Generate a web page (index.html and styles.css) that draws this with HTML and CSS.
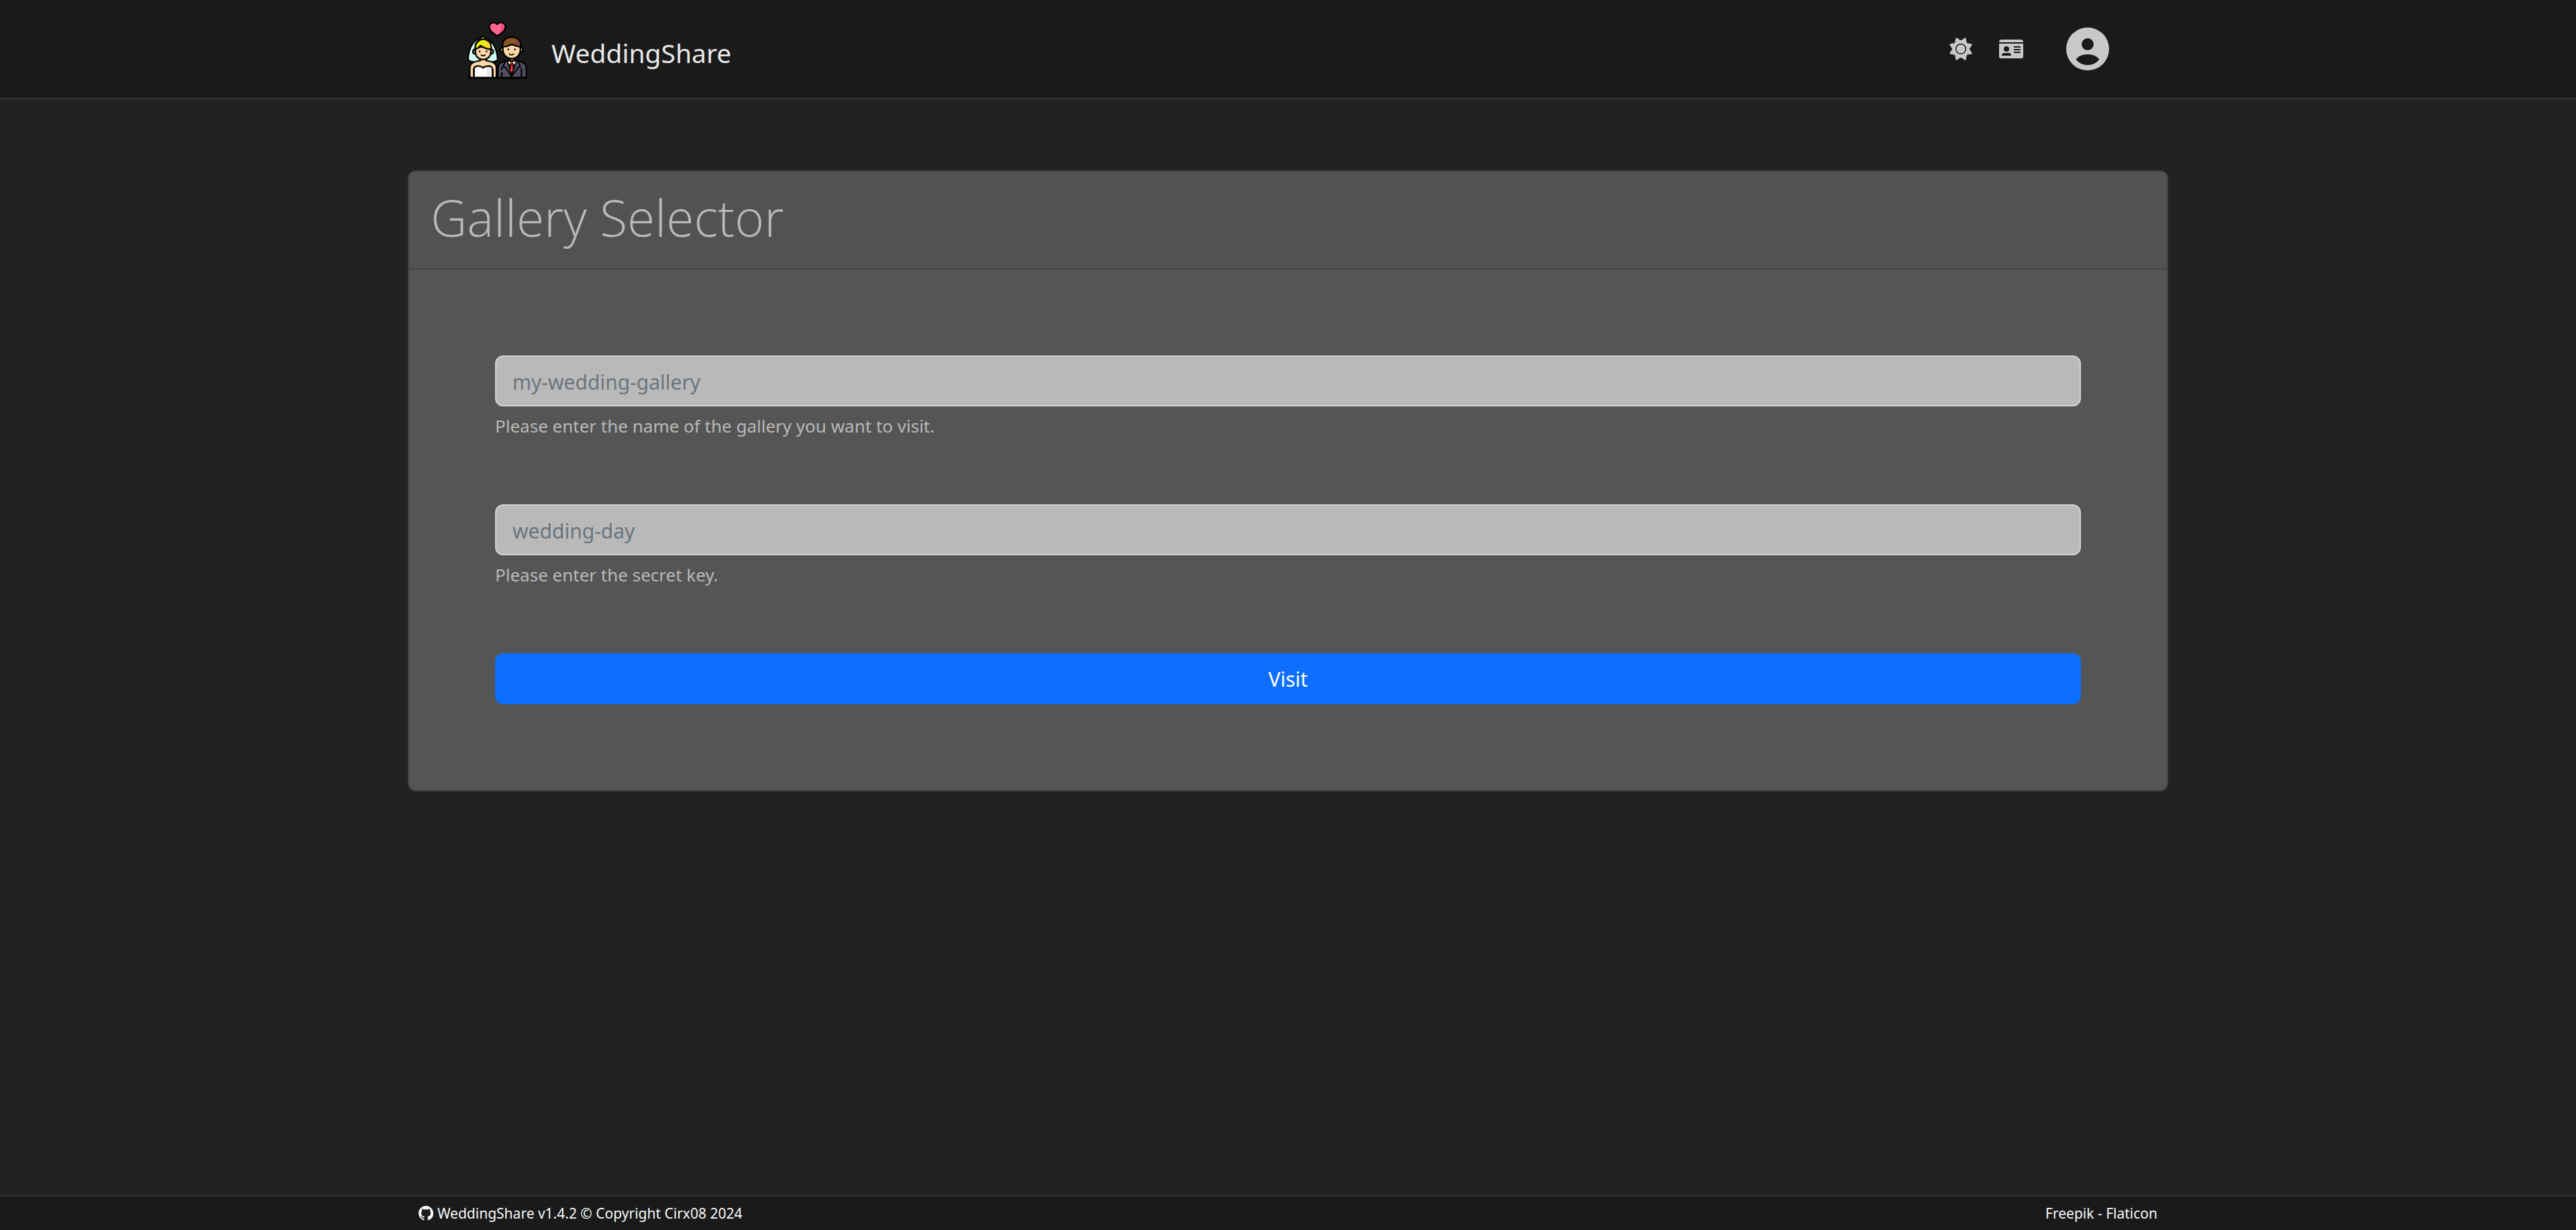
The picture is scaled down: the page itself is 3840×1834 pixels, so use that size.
FILE: index.html
```html
<!DOCTYPE html>
<html lang="en">
<head>
<meta charset="utf-8">
<meta name="viewport" content="width=device-width, initial-scale=1">
<title>WeddingShare</title>
<link rel="stylesheet" href="styles.css">
</head>
<body>
<header class="site-header">
  <nav class="container navbar">
    <a class="brand" href="#">
      <svg class="brand-logo" viewBox="48 24 270 270" aria-hidden="true">
        <g stroke="#000" stroke-width="7" stroke-linejoin="round" stroke-linecap="round">
          <path fill="#ff6690" d="M183 101C166 89 148 78 148 60C148 42 172 34 183 49C195 34 220 42 220 60C220 78 200 90 183 101Z"/>
          <path fill="#ff4f79" stroke="none" d="M198 46C210 42 216 52 216 60C216 76 202 84 189 93C200 77 202 61 198 46Z"/>
          <path fill="#d0fff5" d="M120 111C82 108 55 151 53 205C53 212 72 219 90 218L152 218C170 218 187 212 186 205C182 151 156 108 120 111Z"/>
          <path fill="none" stroke="#273b40" stroke-width="4" d="M84 137Q95 119 110 113M134 113Q149 121 158 137"/>
          <path fill="#dce717" stroke-width="6" d="M109 116C108 101 132 101 132 116Z"/>
          <path fill="#fed8a9" d="M61 287V244C61 221 80 215 108 211V198H134V211C162 215 180 221 180 244V287Z"/>
          <ellipse cx="82" cy="171" rx="7" ry="9" fill="#fed8a9"/>
          <ellipse cx="159" cy="171" rx="7" ry="9" fill="#fed8a9"/>
          <path fill="#fed8a9" d="M86 150H155V172C155 218 86 218 86 172Z"/>
          <path fill="#e9f000" d="M85 159C81 106 158 96 157 160C130 159 122 151 108 144C103 155 96 157 85 159Z"/>
          <path fill="#ffd52d" stroke="none" d="M132 122C149 126 155 143 152 156C136 155 127 151 118 145Q138 145 132 122Z"/>
          <path fill="#fff" d="M79 287V250C79 237 94 234 104 236Q115 237 121 244Q128 236 140 236C154 234 163 240 163 253V287Z"/>
          <path fill="#e8e8e8" stroke="none" d="M137 241Q159 236 159 253V283H137Z"/>
          <path fill="#504e60" d="M187 287V244C187 222 205 215 232 211L248 283L266 211C296 216 314 222 314 246V287Z"/>
          <path fill="#504e60" stroke-width="6" d="M218 217L210 238L220 242L248 281L278 242L287 238L278 217L264 208H232Z"/>
          <path fill="#222026" stroke-width="5" d="M230 213L248 280L268 213Z"/>
          <path fill="#fed8a9" d="M238 195H260V212H238Z"/>
          <path fill="#fff" stroke-width="3" d="M231 212L248 216L268 212L262 231L248 219L237 231Z"/>
          <path fill="#ff3030" stroke-width="2" d="M243 218H254L252 229L255 253L248 269L241 253L246 229Z"/>
          <ellipse cx="205" cy="163" rx="7" ry="9" fill="#fed8a9"/>
          <ellipse cx="291" cy="163" rx="7" ry="9" fill="#fed8a9"/>
          <path fill="#fed8a9" d="M209 139H287V162C286 216 211 216 209 162Z"/>
          <path fill="#8b5720" d="M208 149C197 93 297 91 289 150Q262 145 248 138Q228 150 208 149Z"/>
          <path fill="#87493e" stroke="none" d="M263 114C281 118 287 132 285 144Q270 142 260 136Q268 128 263 114Z"/>
          <path fill="none" d="M79 250V286M163 250V286M292 247V286M204 243V250M204 266V284M57 289H314"/>
          <path fill="none" d="M105 169V171M136 169V171M233 160V162M263 160V162"/>
          <path fill="none" stroke-width="5" d="M112 186Q121 193 130 186M238 181Q248 190 257 181"/>
        </g>
      </svg>
      <span>WeddingShare</span>
    </a>
    <div class="nav-actions">
      <button class="icon-button" type="button" aria-label="Change theme">
        <svg class="icon-theme" viewBox="0 0 34 34" aria-hidden="true">
          <path fill="#c8c8c8" stroke="#c8c8c8" stroke-width="2" stroke-linejoin="round" d="M17 5.500L23.500 1.300L25.100 8.900L32.700 10.500L28.500 17L32.700 23.500L25.100 25.100L23.500 32.700L17 28.500L10.500 32.700L8.900 25.100L1.300 23.500L5.500 17L1.300 10.500L8.900 8.900L10.500 1.300Z"/>
          <circle cx="17" cy="17" r="7.300" fill="none" stroke="#1a1a1a" stroke-width="1.500"/>
        </svg>
      </button>
      <button class="icon-button" type="button" aria-label="Identity">
        <svg class="icon-card" viewBox="0 0 36 28" aria-hidden="true">
          <path fill="#c8c8c8" d="M0 4Q0 0 4 0H32Q36 0 36 4ZM0 6H36V25Q36 28 33 28H3Q0 28 0 25Z"/>
          <circle cx="11" cy="14" r="4" fill="#1a1a1a"/>
          <path fill="#1a1a1a" d="M4 24Q4 20 8 20H14Q18 20 18 24ZM22 10H32V12H22ZM22 14H32V16H22ZM22 18H32V20H22Z"/>
        </svg>
      </button>
      <button class="icon-button account" type="button" aria-label="Account">
        <svg class="icon-account" viewBox="0 0 64 64" aria-hidden="true">
          <circle cx="32" cy="32" r="32" fill="#c8c8c8"/>
          <circle cx="32" cy="25" r="9" fill="#1a1a1a"/>
          <path fill="#1a1a1a" d="M14.500 47.500Q20 40 32 40T49.500 47.500Q43 56 32 56T14.500 47.500Z"/>
        </svg>
      </button>
    </div>
  </nav>
</header>

<main class="main">
  <section class="card">
    <h1 class="card-title">Gallery Selector</h1>
    <form class="card-body">
      <div class="field">
        <input class="text-input" id="gallery" type="text" placeholder="my-wedding-gallery">
        <label class="help" for="gallery">Please enter the name of the gallery you want to visit.</label>
      </div>
      <div class="field">
        <input class="text-input" id="key" type="password" placeholder="wedding-day">
        <label class="help" for="key">Please enter the secret key.</label>
      </div>
      <button class="submit" type="button">Visit</button>
    </form>
  </section>
</main>

<footer class="site-footer">
  <div class="container footer-row">
    <a class="footer-link" href="#">
      <svg class="icon-github" viewBox="0 0 16 16" aria-hidden="true"><path fill="currentColor" d="M8 0C3.580 0 0 3.580 0 8c0 3.540 2.290 6.530 5.470 7.590.4.070.55-.17.55-.38 0-.19-.01-.82-.01-1.490-2.010.37-2.530-.49-2.690-.94-.09-.23-.48-.94-.82-1.130-.28-.15-.68-.52-.01-.53.63-.01 1.080.58 1.230.82.72 1.210 1.870.87 2.330.66.07-.52.28-.87.51-1.070-1.780-.2-3.640-.89-3.640-3.950 0-.87.31-1.590.82-2.150-.08-.2-.36-1.020.08-2.120 0 0 .67-.21 2.200.82.64-.18 1.320-.27 2-.27s1.360.09 2 .27c1.530-1.040 2.200-.82 2.200-.82.44 1.100.16 1.920.08 2.120.51.56.82 1.270.82 2.150 0 3.070-1.870 3.750-3.650 3.950.29.25.54.73.54 1.480 0 1.070-.01 1.930-.01 2.200 0 .21.15.46.55.38A8.010 8.010 0 0 0 16 8c0-4.420-3.580-8-8-8z"/></svg>
      <span>WeddingShare v1.4.2 © Copyright Cirx08 2024</span>
    </a>
    <span><a class="footer-link" href="#">Freepik</a> - <a class="footer-link" href="#">Flaticon</a></span>
  </div>
</footer>
</body>
</html>
```
FILE: styles.css
```css
*, *::before, *::after { box-sizing: border-box; }

body {
  display: flex;
  flex-direction: column;
  min-height: 100vh;
  margin: 0;
  background: #222;
  color: #b9b9b9;
  font-family: "Segoe UI", "Noto Sans", "Open Sans", sans-serif;
  font-size: 30px;
  line-height: 48px;
}

a { color: inherit; text-decoration: none; }
button, input { font: inherit; }
svg { display: block; flex: none; }

.container {
  width: 100%;
  max-width: 2640px;
  margin: 0 auto;
}

.site-header {
  background: #1a1a1a;
  border-bottom: 2px solid #333;
}

.navbar {
  display: flex;
  align-items: center;
  justify-content: space-between;
  padding: 28px 96px;
}

.brand {
  display: flex;
  align-items: center;
  gap: 36px;
  color: #e8e8e8;
  font-size: 39px;
}

.brand span { padding-top: 12px; }
.brand-logo { width: 90px; height: 90px; }

.nav-actions { display: flex; align-items: center; gap: 40px; }

.icon-button {
  padding: 0;
  border: 0;
  background: none;
  cursor: pointer;
}

.account { margin-left: 24px; }
.icon-theme { width: 34px; height: 34px; }
.icon-card { width: 36px; height: 28px; }
.icon-account { width: 64px; height: 64px; }

.main {
  flex: 1;
  width: 100%;
  max-width: 2640px;
  margin: 0 auto;
  padding: 106px 8px;
}

.card {
  border: 2px solid #444;
  border-radius: 12px;
  background: #555;
}

.card-title {
  margin: 0;
  padding: 20px 32px 28px;
  border-bottom: 2px solid #444;
  border-radius: 10px 10px 0 0;
  background: #525252;
  font-family: "Segoe UI", "Open Sans", "Noto Sans", sans-serif;
  font-size: 75px;
  font-weight: 300;
  line-height: 96px;
}

.card-body {
  display: flex;
  flex-direction: column;
  gap: 96px;
  padding: 128px;
}

.field {
  display: flex;
  flex-direction: column;
  gap: 8px;
}

.text-input {
  width: 100%;
  height: 76px;
  padding: 2px 24px 0;
  border: 2px solid #ced4da;
  border-radius: 12px;
  background: #b9b9b9;
  color: #222;
}

.text-input::placeholder { color: #6c757d; opacity: 1; }

.help { font-size: 26px; line-height: 42px; }

.submit {
  height: 76px;
  padding: 2px 24px 0;
  border: 0;
  border-radius: 12px;
  background: #0d6efd;
  color: #fff;
  cursor: pointer;
}

.site-footer {
  border-top: 2px solid #333;
  background: #1a1a1a;
  color: #f8f9fa;
  font-size: 21px;
  line-height: 50px;
}

.footer-row {
  display: flex;
  justify-content: space-between;
  padding: 0 24px;
}

.site-footer .footer-row > .footer-link {
  display: flex;
  align-items: center;
  gap: 6px;
}

.icon-github { width: 22px; height: 22px; }
```
